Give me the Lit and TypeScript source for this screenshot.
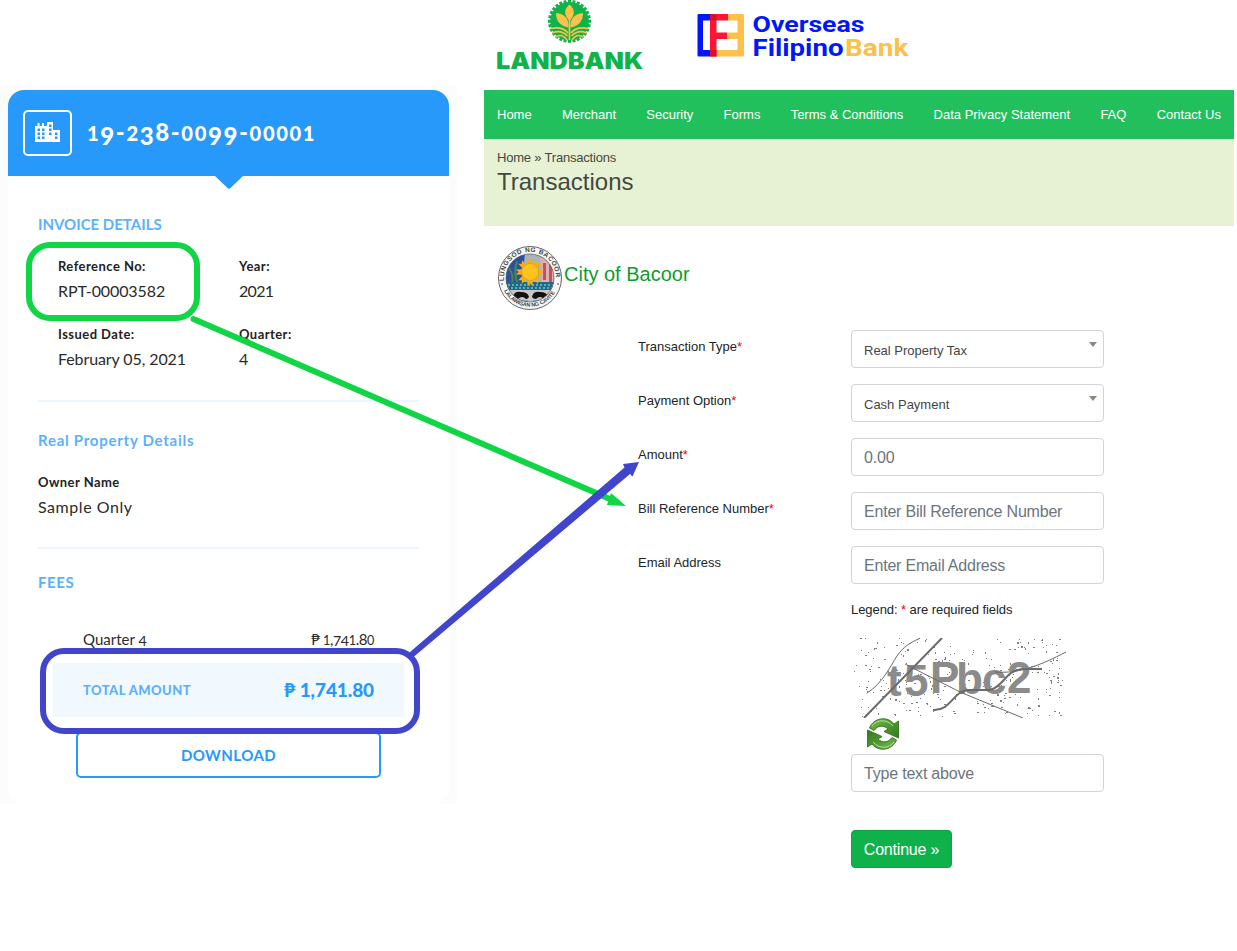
import { LitElement, html, svg, css } from "lit";
import { customElement } from "lit/decorators.js";

// Old-style figures: 0-2 sit at x-height, 3-5, 7 and 9 hang below the baseline.
const oldStyle = (s: string) =>
  [...s].map((c) =>
    /[012]/.test(c)
      ? html`<span class="low">${c}</span>`
      : /[34579]/.test(c)
        ? html`<span class="hang">${c}</span>`
        : c
  );

@customElement("invoice-card")
export class InvoiceCard extends LitElement {
  static styles = css`
    :host { display: block; width: 457px; height: 719px; margin-top: 85px; background: #fcfcfc; font-family: Lato, "Liberation Sans", sans-serif; color: #2b2b2b; box-sizing: border-box; padding: 5px 8px 0; }
    .card { height: 714px; background: #fff; border-radius: 16px; overflow: hidden; }
    .head { height: 86px; background: #2699fb; display: flex; align-items: center; padding-left: 15px; box-sizing: border-box; gap: 15px; color: #fff; }
    .icon { width: 45px; height: 42px; border: 2px solid #fff; border-radius: 5px; display: flex; align-items: center; justify-content: center; }
    .icon svg { display: block; margin-bottom: 2px; }
    .number { font-size: 24px; font-weight: 900; letter-spacing: 1.6px; white-space: nowrap; padding-bottom: 3px; }
    .low { font-size: 0.84em; }
    .hang { vertical-align: -0.15em; line-height: 0; }
    .fee .hang { vertical-align: -0.1em; font-size: 0.95em; }
    .notch { display: block; margin-left: 206px; }
    .body { padding: 0 30px; }
    h2 { margin: 0; font-size: 15px; line-height: 20px; font-weight: 700; color: #5cb1fd; white-space: nowrap; }
    .h1 { padding-top: 25px; letter-spacing: 0; }
    .h2 { padding-top: 28px; letter-spacing: 0.74px; }
    .h3 { padding-top: 23px; letter-spacing: 0.6px; }
    .grid { display: grid; grid-template-columns: 181px 1fr; padding: 21px 0 0 20px; row-gap: 20px; height: 145px; box-sizing: content-box; align-content: start; }
    .label { font-size: 13px; line-height: 22px; font-weight: 700; letter-spacing: 0.45px; color: #222; }
    .value { font-size: 16px; line-height: 28px; margin-bottom: -2px; white-space: nowrap; }
    .ref { letter-spacing: -0.1px; }
    .year { letter-spacing: -0.7px; }
    .sample { letter-spacing: 0.55px; }
    .rule { height: 2px; background: #ebf6ff; }
    .owner { padding-top: 21px; height: 76px; }
    .fee { display: flex; justify-content: space-between; padding: 37px 45px 0; font-size: 15px; line-height: 20px; height: 20px; }
    .fee span { white-space: nowrap; }
    .peso { letter-spacing: -0.4px; }
    .total { margin: 14px 15px 0; height: 54px; background: #f1f9ff; display: flex; align-items: center; justify-content: space-between; padding: 0 30px 0 30px; color: #2699fb; }
    .tl { font-size: 13px; font-weight: 900; color: #5cb1fd; letter-spacing: 0.45px; padding-bottom: 1px; }
    .tv { font-size: 19px; font-weight: 900; letter-spacing: -0.1px; padding-bottom: 1px; }
    .download { margin: 15px 38px 0; height: 42px; border: 2px solid #2699fb; border-radius: 5px; color: #2699fb; font-size: 15px; font-weight: 700; letter-spacing: 0.45px; display: flex; align-items: center; justify-content: center; }
    .download span { padding-bottom: 1px; }
  `;
  render() {
    return html`
      <div class="card">
        <div class="head">
          <div class="icon">
            <svg width="25" height="21" viewBox="0 0 25 21">
              <path fill="#fff" fill-rule="evenodd" d="M0 4H2.5V1H4.5V4H7V1H9V4H12V0H18V8H25V20H0zM2.5 6.500V9H5V6.500zM7 6.500V9H9.500V6.500zM2.500 10.500V13H5V10.500zM7 10.500V13H9.500V10.500zM2.500 14.500V17H5V14.500zM7 14.500V17H9.500V14.500zM14 2.500V5H16.500V2.500zM14 6.500V9H16.500V6.500zM14 10.500V13H16.500V10.500zM20 10.500V13H22.500V10.500zM20 14.500V17H22.500V14.500z"/>
            </svg>
          </div>
          <div class="number">${oldStyle("19-238-0099-00001")}</div>
        </div>
        <svg class="notch" width="30" height="13"><path fill="#2699fb" d="M0 0H29L16.500 12Q15 13.500 13.500 12L1 0z"/></svg>
        <div class="body">
          <h2 class="h1">INVOICE DETAILS</h2>
          <div class="grid">
            <div><div class="label">Reference No:</div><div class="value ref">RPT-00003582</div></div>
            <div><div class="label">Year:</div><div class="value year">2021</div></div>
            <div><div class="label">Issued Date:</div><div class="value ref">February 05, 2021</div></div>
            <div><div class="label">Quarter:</div><div class="value">4</div></div>
          </div>
          <div class="rule"></div>
          <h2 class="h2">Real Property Details</h2>
          <div class="owner"><div class="label">Owner Name</div><div class="value sample">Sample Only</div></div>
          <div class="rule"></div>
          <h2 class="h3">FEES</h2>
          <div class="fee"><span>Quarter ${oldStyle("4")}</span><span class="peso">₱ ${oldStyle("1,741.80")}</span></div>
          <div class="total"><span class="tl">TOTAL AMOUNT</span><span class="tv">₱ 1,741.80</span></div>
          <div class="download"><span>DOWNLOAD</span></div>
        </div>
      </div>`;
  }
}

const teeth = Array.from({ length: 28 }, (_, i) => i * (360 / 28));

@customElement("bank-logos")
export class BankLogos extends LitElement {
  static styles = css`
    :host { display: block; height: 90px; }
    svg { display: block; }
    .land { font-family: Inter, sans-serif; }
    .brand { font-family: Roboto, sans-serif; }
  `;
  render() {
    return html`<svg width="750" height="90" viewBox="484 0 750 90">
      ${teeth.map((a) => svg`<rect x="568" y="-0.2" width="3" height="4" fill="#12b24b" transform="rotate(${a} 569.5 21.300)"/>`)}
      <circle cx="569.500" cy="21.300" r="19.300" fill="#12b24b"/>
      <g fill="#fdc04a">
        <path d="M569.500 4.500C575 9 575.500 15 569.500 21C563.500 15 564 9 569.500 4.500z"/>
        <path d="M556 13C564 14 569 18 568.500 27.500C560 26 556 21 556 13z"/>
        <path d="M583 13C575 14 570 18 570.500 27.500C579 26 583 21 583 13z"/>
      </g>
      <g fill="none" stroke="#fdc04a" stroke-width="1.700">
        <path d="M569.500 18V40"/>
        <path d="M551 28.500C558 27 564 28 568 33M552.500 33C558 30.500 563 31.500 567.500 36M556 37C560 34 564 36 567 40"/>
        <path d="M588 28.500C581 27 575 28 571 33M586.500 33C581 30.500 576 31.500 571.500 36M583 37C579 34 575 36 572 40"/>
      </g>
      <text class="land" x="496" y="69" font-size="23" font-weight="900" fill="#12b24b" textLength="147" lengthAdjust="spacingAndGlyphs">LANDBANK</text>
      <path fill="#0018f9" d="M698.500 14H710V20.500H703V50H710V56.500H698.500Q697.500 56.500 697.500 55.500V15Q697.500 14 698.500 14z"/>
      <path fill="#fdc04a" d="M728 14H742.500Q744 14 744 15.500V55Q744 56.500 742.500 56.500H716V50H737.500V39H727V32.500H737.500V20.500H728z"/>
      <path fill="#ff1433" d="M710 14H728V20.500H716.500V32.500H727V39H716.500V56.500H710z"/>
      <path fill="#d8102e" d="M710 14H716.500V20.500H710zM710 50H716.500V56.500H710z"/>
      <g class="brand" font-weight="700" font-size="23">
        <text x="752.500" y="31.500" font-size="22" fill="#0018f9" textLength="112" lengthAdjust="spacingAndGlyphs">Overseas</text>
        <text x="752.500" y="56" fill="#0018f9" textLength="91" lengthAdjust="spacingAndGlyphs">Filipino</text>
        <text x="845" y="56" fill="#fdc04a" textLength="63.500" lengthAdjust="spacingAndGlyphs">Bank</text>
      </g>
    </svg>`;
  }
}

const rays = [0, 45, 90, 135, 180, 225, 270, 315];

@customElement("city-seal")
export class CitySeal extends LitElement {
  static styles = css`
    :host { display: block; width: 66px; height: 66px; }
    svg { display: block; }
    text { font-family: "Liberation Sans", Arial, sans-serif; font-weight: 700; fill: #444; }
  `;
  render() {
    return html`<svg width="66" height="66" viewBox="0 0 66 66">
      <defs>
        <clipPath id="in"><circle cx="32" cy="32" r="24"/></clipPath>
        <path id="top" d="M6.500 37A26 26 0 1 1 57.500 37"/>
        <path id="bot" d="M4.500 41A29 29 0 0 0 59.500 41"/>
      </defs>
      <circle cx="32" cy="32" r="31.500" fill="#f6f6f6" stroke="#666" stroke-width="1"/>
      <g clip-path="url(#in)">
        <rect width="66" height="66" fill="#a8b4c0"/>
        <path fill="#2c4fa0" d="M5 5H27L24 42H5z"/>
        <path fill="#d9b3b3" d="M42 8H60V42H44z"/>
        <path fill="#c8505a" d="M45 17H48V34H45zM51 14H54V38H51z"/>
        <path stroke="#4b8a45" stroke-width="2" fill="none" d="M11 22Q17 30 13 42M19 15Q15 28 20 38"/>
        <path fill="#216a87" d="M8 36H58V44H8z"/>
        <path stroke="#72c2dc" stroke-width="1.500" stroke-dasharray="2 2" d="M10 39H57M9 42H57"/>
        <path fill="#c8c8c8" d="M8 44H58V60H8z"/>
        <path fill="#111" d="M15 51Q16 45 23 46Q30 46 31 51Q30 53 28 53Q24 49 20 53Q17 53 15 51zM34 51Q35 45 42 46Q49 46 50 51Q48 53 46 53Q42 49 38 53Q35 53 34 51z"/>
        <path stroke="#5ca6bf" stroke-width="1.500" d="M17 55H30M35 55H48"/>
      </g>
      ${rays.map((a) => svg`<path fill="#f4b016" d="M29 25L29.500 12L32 14.500L34.500 12L35 25z" transform="rotate(${a} 32 26)"/>`)}
      <circle cx="32" cy="26" r="8.500" fill="#fbc31b" stroke="#e09c18" stroke-width="0.800"/>
      <circle cx="32" cy="32" r="24" fill="none" stroke="#555" stroke-width="0.700"/>
      <text font-size="6.500"><textPath href="#top" textLength="84" startOffset="2">LUNGSOD NG BACOOR</textPath></text>
      <text font-size="5.500"><textPath href="#bot" textLength="62" startOffset="4">LALAWIGAN NG CAVITE</textPath></text>
      <circle cx="4" cy="38" r="0.800" fill="#333"/><circle cx="60" cy="38" r="0.800" fill="#333"/>
    </svg>`;
  }
}

// Deterministic speckle for the captcha background.
const speckle = (() => {
  let s = 7919;
  const rnd = () => (s = (s * 16807) % 2147483647) / 2147483647;
  let d = "";
  for (let i = 0; i < 290; i++) {
    const x = 3 + Math.floor(rnd() * 209);
    const y = Math.floor(rnd() * 79);
    const w = rnd() > 0.7 ? 2 : 1;
    const h = rnd() > 0.85 ? 2 : 1;
    d += `M${x} ${y}h${w}v${h}h${-w}z`;
  }
  return d;
})();

@customElement("captcha-image")
export class CaptchaImage extends LitElement {
  static styles = css`
    :host { display: block; height: 116px; }
    svg { display: block; }
    .refresh { margin-left: 15px; }
    text { font-family: "Liberation Sans", Arial, sans-serif; font-weight: 700; font-size: 44px; fill: #8b8b8b; }
  `;
  render() {
    return html`
      <svg width="217" height="80" viewBox="0 0 217 80">
        <path d="${speckle}" fill="#808080" shape-rendering="crispEdges"/>
        <text x="36 53 79 105 131 156" y="58 58 55 56 56 55">t5Pbc2</text>
        <g fill="none" stroke="#6b6b6b">
          <path d="M15.700 55.300C32 45 40 27 46 18S60 4 69 0.300"/>
          <path stroke-width="2" d="M13 80L91 0"/>
          <path d="M54 26L109 54L172 80"/>
          <path stroke-width="2" d="M82 72C100 73 102 53 117 52H139C154 48 154 31 174 31H191"/>
          <path d="M144 34C168 36 190 27 215 14"/>
        </g>
      </svg>
      <svg class="refresh" width="34" height="33" viewBox="0 0 34 33">
        <defs><linearGradient id="g" x2="1" y2="1"><stop offset="0" stop-color="#7dbb58"/><stop offset="0.500" stop-color="#4f9a30"/><stop offset="1" stop-color="#337a1c"/></linearGradient></defs>
        <g fill="url(#g)" stroke="#33701f" stroke-width="0.900">
          <path d="M3.500 10C8 -1 22 -2 28 6L32.500 3V20L18 13.500L22 11C18 7 12 7 8 12.500z"/>
          <path d="M3.500 10C8 -1 22 -2 28 6L32.500 3V20L18 13.500L22 11C18 7 12 7 8 12.500z" transform="rotate(180 17 16)"/>
        </g>
        <path fill="none" stroke="#b5dda0" d="M6 8C11 1 21 1 27 8M28 24C23 31 13 31 7 24"/>
      </svg>`;
  }
}

const menu = ["Home", "Merchant", "Security", "Forms", "Terms & Conditions", "Data Privacy Statement", "FAQ", "Contact Us"];

const fields = [
  { label: "Transaction Type", required: true, kind: "select", text: "Real Property Tax" },
  { label: "Payment Option", required: true, kind: "select", text: "Cash Payment" },
  { label: "Amount", required: true, kind: "input", text: "0.00" },
  { label: "Bill Reference Number", required: true, kind: "input", text: "Enter Bill Reference Number" },
  { label: "Email Address", required: false, kind: "input", text: "Enter Email Address" },
];

@customElement("payment-page")
export class PaymentPage extends LitElement {
  static styles = css`
    :host { display: block; width: 750px; font: 13px/20px "Liberation Sans", Arial, sans-serif; color: #212529; }
    nav { height: 49px; background: #22bf5d; color: #fff; display: flex; align-items: center; justify-content: space-between; padding: 0 13px; white-space: nowrap; }
    .crumbs { height: 87px; box-sizing: border-box; background: #e7f2d5; color: #43483f; padding: 9px 13px; }
    .trail { letter-spacing: -0.2px; }
    h1 { font-size: 24px; line-height: 28px; font-weight: 400; margin: 0; }
    .city { display: flex; padding: 20px 0 0 14px; height: 85px; box-sizing: border-box; }
    .city span { font-size: 20px; line-height: 57px; color: #119c2c; }
    .form { padding: 19px 0 0 154px; }
    .row { display: grid; grid-template-columns: 213px 253px; height: 54px; }
    .row label { padding-top: 7px; }
    .req { color: #f00; }
    .box { box-sizing: border-box; height: 38px; width: 253px; border: 1px solid #ced4da; border-radius: 4px; display: flex; align-items: center; justify-content: space-between; padding: 0 6px 0 12px; }
    .select { color: #444; padding-top: 3px; }
    .input { font-size: 16px; letter-spacing: -0.2px; color: #6c757d; padding-top: 2px; }
    .arrow { width: 0; height: 0; border: 4px solid transparent; border-top: 5px solid #888; border-bottom: 0; margin-bottom: 13px; }
    .side { padding-left: 213px; }
    .legend { height: 38px; line-height: 19px; letter-spacing: -0.07px; }
    .go { width: 101px; height: 38px; box-sizing: border-box; margin-top: 38px; border-radius: 4px; background: #0fb14a; border: 1px solid #0ca543; color: #fff; font-size: 16px; letter-spacing: -0.2px; padding-top: 2px; display: flex; align-items: center; justify-content: center; }
  `;
  render() {
    return html`
      <bank-logos></bank-logos>
      <nav>${menu.map((m) => html`<span>${m}</span>`)}</nav>
      <div class="crumbs"><div class="trail">Home » Transactions</div><h1>Transactions</h1></div>
      <div class="city"><city-seal></city-seal><span>City of Bacoor</span></div>
      <div class="form">
        ${fields.map(
          (f) => html`<div class="row">
            <label>${f.label}${f.required ? html`<span class="req">*</span>` : ""}</label>
            <div class="box ${f.kind}">${f.text}${f.kind === "select" ? html`<i class="arrow"></i>` : ""}</div>
          </div>`
        )}
        <div class="side">
          <div class="legend">Legend: <span class="req">*</span> are required fields</div>
          <captcha-image></captcha-image>
          <div class="box input">Type text above</div>
          <div class="go">Continue »</div>
        </div>
      </div>`;
  }
}

@customElement("app-root")
export class AppRoot extends LitElement {
  static styles = css`
    :host { display: flex; position: relative; gap: 27px; width: 1237px; height: 951px; background: #fff; overflow: hidden; }
    .marks { position: absolute; left: 0; top: 0; pointer-events: none; }
  `;
  render() {
    return html`
      <invoice-card></invoice-card>
      <payment-page></payment-page>
      <svg class="marks" width="1237" height="951" viewBox="0 0 1237 951">
        <g fill="none" stroke-width="6">
          <rect x="29" y="245" width="168" height="73" rx="21" stroke="#10d545"/>
          <path d="M193.500 319L610 499" stroke="#10d545" stroke-linecap="round"/>
          <rect x="43" y="651" width="374" height="80" rx="21" stroke="#4045cc"/>
        </g>
        <path fill="#10d545" d="M611 493L626 506L607 505z"/>
        <path fill="#4045cc" d="M409.500 652.500L624.500 467.500L623 464L639 462L632.500 476.500L630 474L413.500 657z"/>
      </svg>`;
  }
}
